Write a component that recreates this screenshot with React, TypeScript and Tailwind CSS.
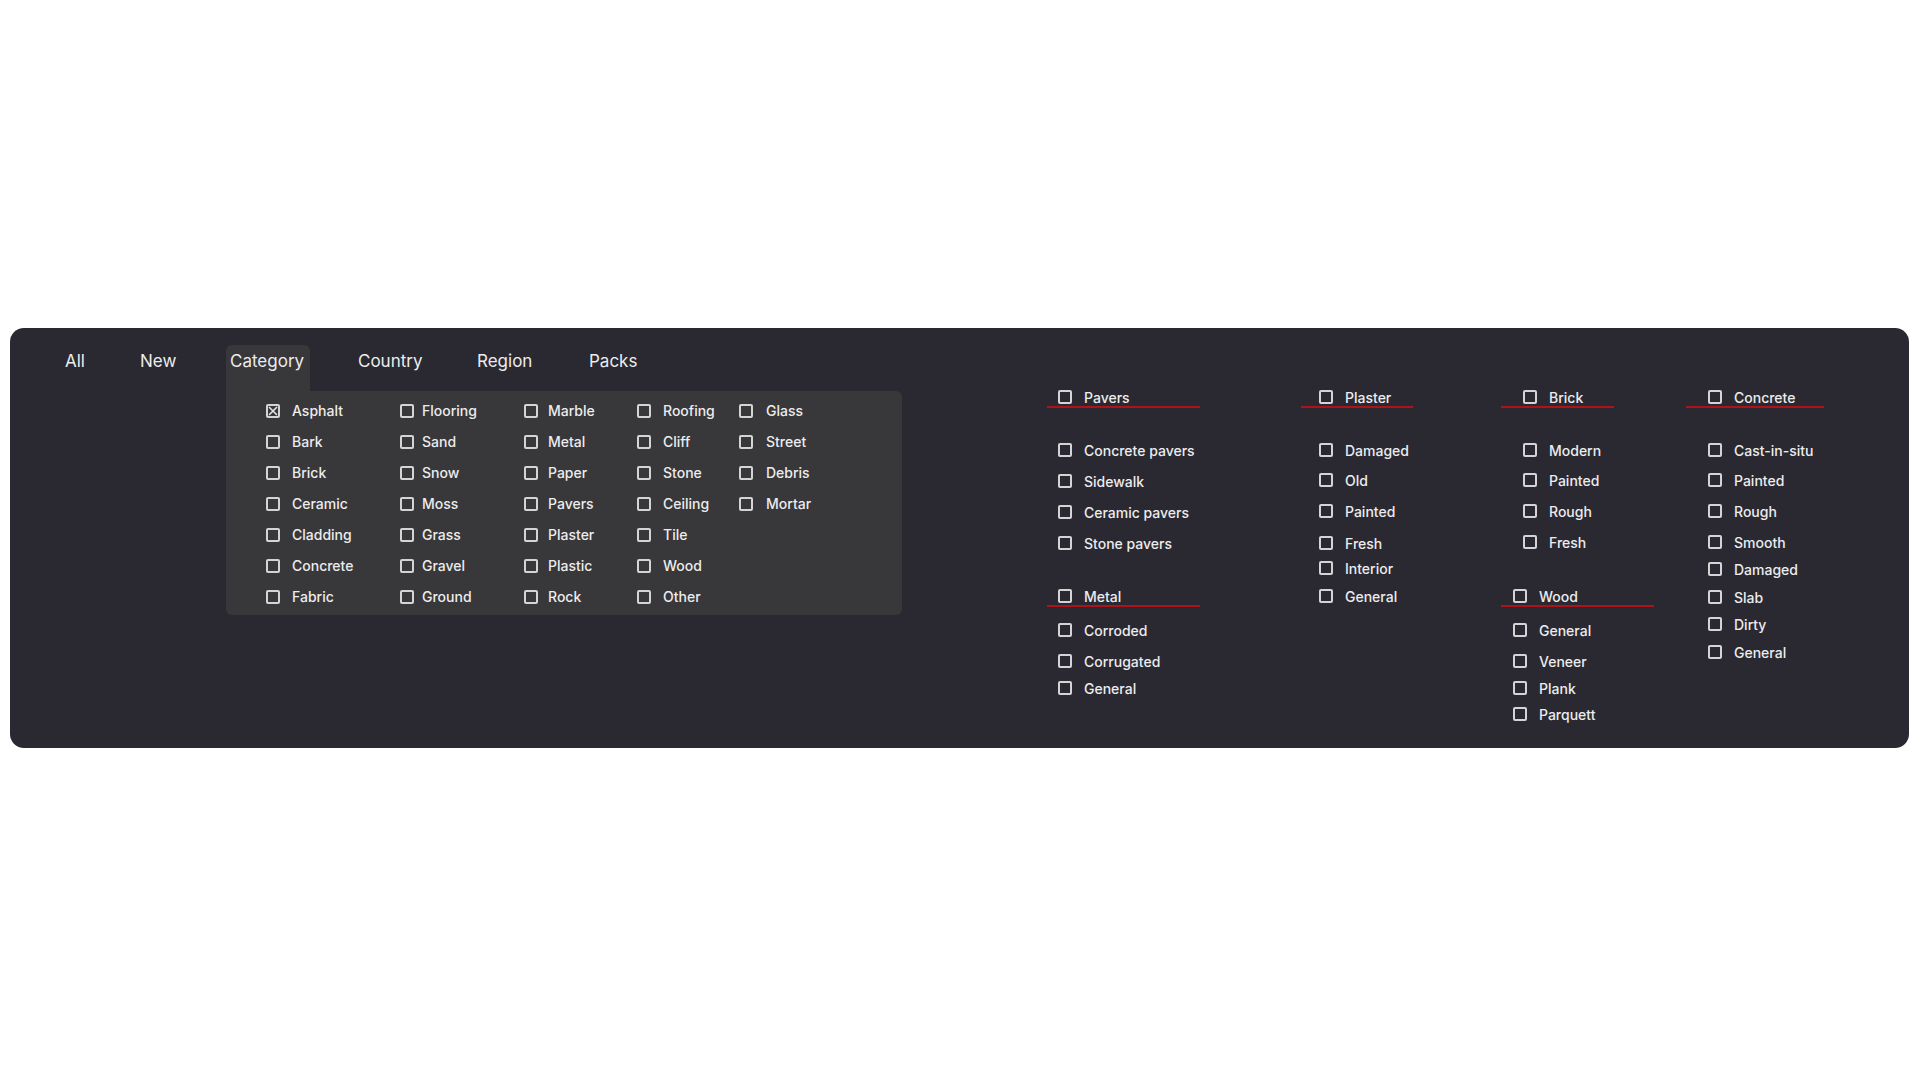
import { ReactNode } from "react";

type Item = { label: string; mt: string };

function Box({ checked = false }: { checked?: boolean }) {
  return (
    <span className="relative flex h-[14px] w-[14px] shrink-0 items-center justify-center rounded-[2px] border-2 border-[#d4d4d6]">
      {checked && (
        <svg className="h-[10px] w-[10px]" viewBox="0 0 10 10" fill="none" stroke="#e4e4e6" strokeWidth={1.6}>
          <path d="M1 1l8 8M9 1l-8 8" />
        </svg>
      )}
    </span>
  );
}

const menuCols: { w: string; gap: string; items: string[] }[] = [
  { w: "w-[134px]", gap: "gap-3", items: ["Asphalt", "Bark", "Brick", "Ceramic", "Cladding", "Concrete", "Fabric"] },
  { w: "w-[124px]", gap: "gap-[8px]", items: ["Flooring", "Sand", "Snow", "Moss", "Grass", "Gravel", "Ground"] },
  { w: "w-[113px]", gap: "gap-[10px]", items: ["Marble", "Metal", "Paper", "Pavers", "Plaster", "Plastic", "Rock"] },
  { w: "w-[102px]", gap: "gap-3", items: ["Roofing", "Cliff", "Stone", "Ceiling", "Tile", "Wood", "Other"] },
  { w: "w-[120px]", gap: "gap-[13px]", items: ["Glass", "Street", "Debris", "Mortar"] },
];

function Header({ label, w, pl, mt = "" }: { label: string; w: string; pl: string; mt?: string }) {
  return (
    <div className={`flex h-[20px] items-center gap-3 border-b-2 border-[#b0121a] ${w} ${pl} ${mt}`}>
      <Box />
      <span>{label}</span>
    </div>
  );
}

function Rows({ items, pl }: { items: Item[]; pl: string }) {
  return (
    <>
      {items.map(it => (
        <div key={it.label + it.mt} className={`flex h-[20px] items-center gap-3 ${pl} ${it.mt}`}>
          <Box />
          <span>{it.label}</span>
        </div>
      ))}
    </>
  );
}

function Tab({ w, children, active = false }: { w: string; children: ReactNode; active?: boolean }) {
  return (
    <div className={`h-[46px] pl-1 pt-[4px] leading-[24px] ${w} ${active ? "rounded-t-md bg-[#383739]" : ""}`}>
      {children}
    </div>
  );
}

export default function App() {
  return (
    <div className="min-h-screen bg-white pt-[328px] font-['Inter',sans-serif] text-[#ececee]">
      <div className="ml-[10px] flex h-[420px] w-[1899px] rounded-[14px] bg-[#2a2931]">
        {/* tabs + category dropdown */}
        <div className="w-[1037px] shrink-0 pl-[51px] pt-[17px]">
          <div className="flex items-start text-[17px]">
            <Tab w="w-[75px]">All</Tab>
            <Tab w="w-[90px]">New</Tab>
            <div className="relative">
              <Tab w="w-[84px]" active>
                Category
              </Tab>
              <div className="absolute left-0 top-full flex h-[224px] w-[676px] rounded-b-md rounded-tr-md bg-[#383739] pl-[40px] pt-[4px] text-[14px] font-medium">
                {menuCols.map((col, ci) => (
                  <div key={ci} className={`flex flex-col ${col.w}`}>
                    {col.items.map(label => (
                      <div key={label} className={`flex h-[31px] items-center ${col.gap}`}>
                        <Box checked={label === "Asphalt"} />
                        <span>{label}</span>
                      </div>
                    ))}
                  </div>
                ))}
              </div>
            </div>
            <div className="w-[44px]" />
            <Tab w="w-[119px]">Country</Tab>
            <Tab w="w-[112px]">Region</Tab>
            <Tab w="w-[80px]">Packs</Tab>
          </div>
        </div>

        {/* sub categories */}
        <div className="flex flex-1 pt-[60px] text-[14px] font-medium">
          <div className="flex w-[254px] flex-col">
            <Header label="Pavers" w="w-[153px]" pl="pl-[11px]" />
            <Rows
              pl="pl-[11px]"
              items={[
                { label: "Concrete pavers", mt: "mt-[32px]" },
                { label: "Sidewalk", mt: "mt-[11px]" },
                { label: "Ceramic pavers", mt: "mt-[11px]" },
                { label: "Stone pavers", mt: "mt-[11px]" },
              ]}
            />
            <Header label="Metal" w="w-[153px]" pl="pl-[11px]" mt="mt-[34px]" />
            <Rows
              pl="pl-[11px]"
              items={[
                { label: "Corroded", mt: "mt-[13px]" },
                { label: "Corrugated", mt: "mt-[11px]" },
                { label: "General", mt: "mt-[7px]" },
              ]}
            />
          </div>

          <div className="flex w-[200px] flex-col">
            <Header label="Plaster" w="w-[112px]" pl="pl-[18px]" />
            <Rows
              pl="pl-[18px]"
              items={[
                { label: "Damaged", mt: "mt-[32px]" },
                { label: "Old", mt: "mt-[10px]" },
                { label: "Painted", mt: "mt-[11px]" },
                { label: "Fresh", mt: "mt-[12px]" },
                { label: "Interior", mt: "mt-[5px]" },
                { label: "General", mt: "mt-[8px]" },
              ]}
            />
          </div>

          <div className="flex w-[185px] flex-col">
            <Header label="Brick" w="w-[113px]" pl="pl-[22px]" />
            <Rows
              pl="pl-[22px]"
              items={[
                { label: "Modern", mt: "mt-[32px]" },
                { label: "Painted", mt: "mt-[10px]" },
                { label: "Rough", mt: "mt-[11px]" },
                { label: "Fresh", mt: "mt-[11px]" },
              ]}
            />
            <Header label="Wood" w="w-[153px]" pl="pl-[12px]" mt="mt-[35px]" />
            <Rows
              pl="pl-[12px]"
              items={[
                { label: "General", mt: "mt-[13px]" },
                { label: "Veneer", mt: "mt-[11px]" },
                { label: "Plank", mt: "mt-[7px]" },
                { label: "Parquett", mt: "mt-[6px]" },
              ]}
            />
          </div>

          <div className="flex flex-1 flex-col">
            <Header label="Concrete" w="w-[138px]" pl="pl-[22px]" />
            <Rows
              pl="pl-[22px]"
              items={[
                { label: "Cast-in-situ", mt: "mt-[32px]" },
                { label: "Painted", mt: "mt-[10px]" },
                { label: "Rough", mt: "mt-[11px]" },
                { label: "Smooth", mt: "mt-[11px]" },
                { label: "Damaged", mt: "mt-[7px]" },
                { label: "Slab", mt: "mt-[8px]" },
                { label: "Dirty", mt: "mt-[7px]" },
                { label: "General", mt: "mt-[8px]" },
              ]}
            />
          </div>
        </div>
      </div>
    </div>
  );
}
